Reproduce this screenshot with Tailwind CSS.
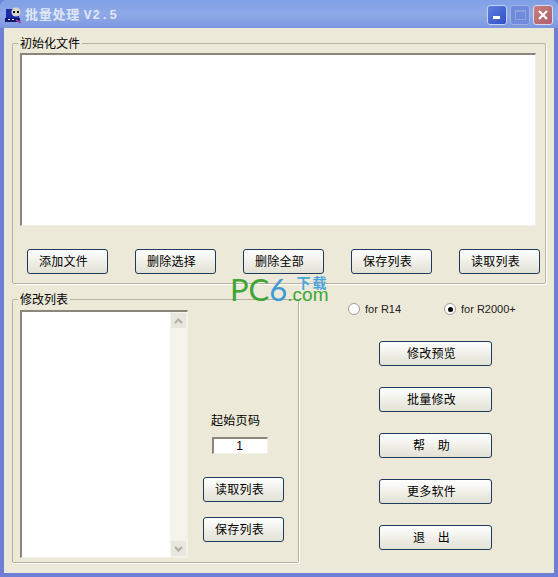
<!DOCTYPE html>
<html lang="zh">
<head>
<meta charset="utf-8">
<script src="https://cdn.jsdelivr.net/npm/@tailwindcss/browser@4"></script>
</head>
<body class="m-0 overflow-hidden bg-[#ece9d8]">
<div class="w-[558px] h-[577px] flex flex-col bg-[#6f7fd6] font-['Noto_Sans_CJK_SC','Liberation_Sans',sans-serif] text-[12px] text-black">
  <!-- title bar -->
  <div class="h-[28px] shrink-0 flex items-center pl-[5px] pr-[5px] pt-[2px] rounded-t-[6px] bg-gradient-to-b from-[#7f9fe6] via-[#8fa9e8] to-[#7c97e0]">
    <svg class="w-[18px] h-[18px] shrink-0" viewBox="0 0 18 18">
      <rect x="1" y="3" width="13" height="11" fill="#1a2aa8"/>
      <rect x="0" y="12" width="15" height="4" fill="#0c1670"/>
      <circle cx="11" cy="6" r="4.5" fill="#d8d8c8"/>
      <rect x="8" y="5" width="2" height="2" fill="#111"/>
      <rect x="12" y="5" width="2" height="2" fill="#111"/>
      <rect x="3" y="13" width="2" height="1" fill="#fff"/>
      <rect x="7" y="13" width="2" height="1" fill="#fff"/>
      <path d="M11 14l5 3" stroke="#a04a9a" stroke-width="1.5"/>
    </svg>
    <span class="ml-[2px] text-[#dfe6f6] font-bold text-[13px] tracking-[0.75px] whitespace-pre">批量处理 <span class="font-['Liberation_Mono',monospace]">V2.5</span></span>
    <div class="ml-auto flex gap-[3px]">
      <div class="w-[20px] h-[20px] rounded-[3px] border border-[#c4d0f0] bg-gradient-to-br from-[#5f7fe0] to-[#2f50c4] flex items-end pl-[5px] pb-[5px]"><div class="w-[7px] h-[3px] bg-white"></div></div>
      <div class="w-[20px] h-[20px] rounded-[3px] border border-[#9fb0e6] bg-[#6f8bdc] flex items-center justify-center"><div class="w-[11px] h-[10px] border border-[#8fa3e0] border-t-2"></div></div>
      <div class="w-[20px] h-[20px] rounded-[3px] border border-[#d8dcec] bg-gradient-to-br from-[#c98080] to-[#ad5f6c] flex items-center justify-center">
        <svg class="w-[12px] h-[12px]" viewBox="0 0 12 12"><path d="M2 2l8 8M10 2l-8 8" stroke="#fff" stroke-width="2.2" fill="none"/></svg>
      </div>
    </div>
  </div>
  <!-- client -->
  <div class="mx-[4px] mb-[4px] flex-1 bg-[#ece9d8] px-[8px] pt-[15px] flex flex-col relative">
    <!-- group 1 -->
    <div class="relative w-[534px] h-[241px] border border-[#b5b2a3] rounded-[2px] shadow-[1px_1px_0_#fff] px-[7px] pt-[9px]">
      <span class="absolute left-[5px] -top-[9px] bg-[#ece9d8] px-[2px] leading-[15px]">初始化文件</span>
      <div class="w-[516px] h-[173px] bg-white border-t-2 border-l-2 border-t-[#8a877a] border-l-[#8a877a] border-r border-b border-r-[#f4f2e8] border-b-[#f4f2e8]"></div>
      <div class="flex gap-[27px] mt-[23px] ml-[7px]">
        <button class="shrink-0 w-[81px] h-[25px] pr-[8px] pb-[2px] rounded-[3px] border border-[#1f3a5c] bg-gradient-to-b from-white to-[#e2e1d4] tracking-[0.3px]">添加文件</button>
        <button class="shrink-0 w-[81px] h-[25px] pr-[8px] pb-[2px] rounded-[3px] border border-[#1f3a5c] bg-gradient-to-b from-white to-[#e2e1d4] tracking-[0.3px]">删除选择</button>
        <button class="shrink-0 w-[81px] h-[25px] pr-[8px] pb-[2px] rounded-[3px] border border-[#1f3a5c] bg-gradient-to-b from-white to-[#e2e1d4] tracking-[0.3px]">删除全部</button>
        <button class="shrink-0 w-[81px] h-[25px] pr-[8px] pb-[2px] rounded-[3px] border border-[#1f3a5c] bg-gradient-to-b from-white to-[#e2e1d4] tracking-[0.3px]">保存列表</button>
        <button class="shrink-0 w-[81px] h-[25px] pr-[8px] pb-[2px] rounded-[3px] border border-[#1f3a5c] bg-gradient-to-b from-white to-[#e2e1d4] tracking-[0.3px]">读取列表</button>
      </div>
    </div>
    <!-- lower -->
    <div class="flex mt-[15px]">
      <div class="relative w-[287px] h-[264px] border border-[#b5b2a3] rounded-[2px] shadow-[1px_1px_0_#fff] pl-[7px] pt-[10px] flex">
        <span class="absolute left-[5px] -top-[9px] bg-[#ece9d8] px-[2px] leading-[15px]">修改列表</span>
        <div class="w-[168px] h-[248px] flex bg-white border-t-2 border-l-2 border-t-[#8a877a] border-l-[#8a877a] border-r border-b border-r-[#f4f2e8] border-b-[#f4f2e8]">
          <div class="flex-1"></div>
          <div class="w-[17px] flex flex-col justify-between bg-[#f5f4ec]">
            <div class="h-[17px] bg-[#e8e7dd] border border-[#f4f4ee] flex items-center justify-center">
              <svg class="w-[9px] h-[6px]" viewBox="0 0 9 6"><path d="M1 5l3.5-3.5L8 5" stroke="#b0ae9f" stroke-width="2" fill="none"/></svg>
            </div>
            <div class="h-[17px] bg-[#e8e7dd] border border-[#f4f4ee] flex items-center justify-center">
              <svg class="w-[9px] h-[6px]" viewBox="0 0 9 6"><path d="M1 1l3.5 3.5L8 1" stroke="#b0ae9f" stroke-width="2" fill="none"/></svg>
            </div>
          </div>
        </div>
        <div class="ml-[15px] flex flex-col">
          <span class="mt-[102px] ml-[8px] leading-[16px] tracking-[0.3px]">起始页码</span>
          <div class="mt-[9px] ml-[9px] w-[56px] h-[17px] pr-[2px] bg-white border-t-2 border-l-2 border-t-[#8a877a] border-l-[#8a877a] border-r border-b border-r-[#f4f2e8] border-b-[#f4f2e8] flex items-center justify-center font-['Liberation_Sans',sans-serif] leading-none">1</div>
          <button class="mt-[23px] w-[81px] h-[25px] pr-[8px] pb-[2px] rounded-[3px] border border-[#1f3a5c] bg-gradient-to-b from-white to-[#e2e1d4] tracking-[0.3px]">读取列表</button>
          <button class="mt-[15px] w-[81px] h-[25px] pr-[8px] pb-[2px] rounded-[3px] border border-[#1f3a5c] bg-gradient-to-b from-white to-[#e2e1d4] tracking-[0.3px]">保存列表</button>
        </div>
      </div>
      <div class="flex-1 flex flex-col">
        <div class="flex mt-[1px] ml-[49px] h-[18px] items-center font-['Liberation_Sans',sans-serif] text-[#222] text-[11px]">
          <div class="w-[96px] flex items-center">
            <span class="w-[12px] h-[12px] rounded-full border border-[#a09e90] bg-white"></span>
            <span class="ml-[5px]">for R14</span>
          </div>
          <div class="flex items-center">
            <span class="w-[12px] h-[12px] rounded-full border border-[#a09e90] bg-white flex items-center justify-center"><span class="w-[5px] h-[5px] rounded-full bg-black"></span></span>
            <span class="ml-[5px]">for R2000+</span>
          </div>
        </div>
        <div class="ml-[80px] mt-[23px] flex flex-col gap-[21px]">
          <button class="w-[113px] h-[25px] pr-[8px] pb-[2px] rounded-[3px] border border-[#1f3a5c] bg-gradient-to-b from-white to-[#e2e1d4] tracking-[0.3px]">修改预览</button>
          <button class="w-[113px] h-[25px] pr-[8px] pb-[2px] rounded-[3px] border border-[#1f3a5c] bg-gradient-to-b from-white to-[#e2e1d4] tracking-[0.3px]">批量修改</button>
          <button class="w-[113px] h-[25px] pr-[8px] pb-[2px] rounded-[3px] border border-[#1f3a5c] bg-gradient-to-b from-white to-[#e2e1d4] tracking-[0.3px]">帮　助</button>
          <button class="w-[113px] h-[25px] pr-[8px] pb-[2px] rounded-[3px] border border-[#1f3a5c] bg-gradient-to-b from-white to-[#e2e1d4] tracking-[0.3px]">更多软件</button>
          <button class="w-[113px] h-[25px] pr-[8px] pb-[2px] rounded-[3px] border border-[#1f3a5c] bg-gradient-to-b from-white to-[#e2e1d4] tracking-[0.3px]">退　出</button>
        </div>
      </div>
    </div>
    <!-- watermark -->
    <div class="absolute left-[226px] top-[246px] flex items-baseline leading-none">
      <span class="font-['Lato',sans-serif] text-[31px] text-[#3fa535]">PC</span><span class="font-['Lato',sans-serif] text-[31px] text-[#3e9ad6]">6</span>
      <span class="relative font-['Liberation_Sans',sans-serif] text-[19px] text-[#3fa535]">.com<span class="absolute right-0 -top-[10px] text-[14px] leading-none font-bold tracking-[2px] text-[#4aa5dc] font-['Noto_Sans_CJK_SC',sans-serif]">下载</span></span>
    </div>
  </div>
</div>
</body>
</html>
